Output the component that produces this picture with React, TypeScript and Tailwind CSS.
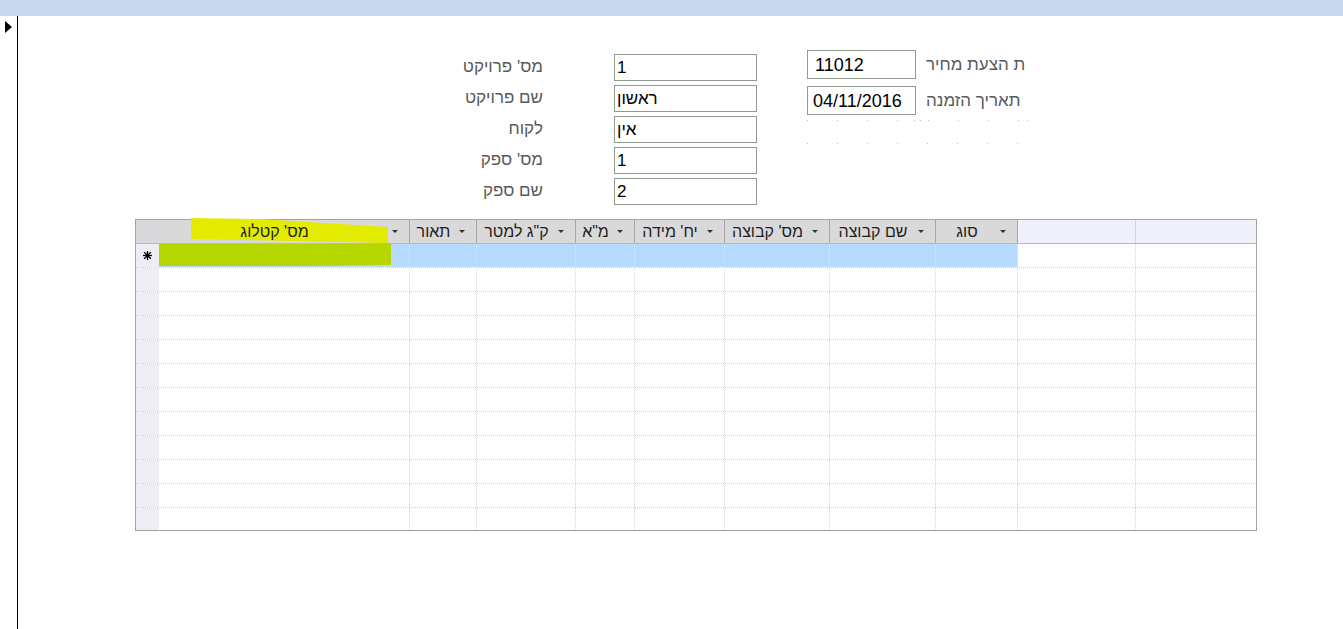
import React from "react";

const cols = [
  { w: 251, t: "מס' קטלוג" },
  { w: 67, t: "תאור" },
  { w: 99, t: 'ק"ג למטר' },
  { w: 59, t: 'מ"א' },
  { w: 90, t: "יח' מידה" },
  { w: 105, t: "מס' קבוצה" },
  { w: 106, t: "שם קבוצה" },
  { w: 82, t: "סוג" },
];

const gridCls =
  "grid grid-cols-[23px_251px_67px_99px_59px_90px_105px_106px_82px_118px_120px]";

function Arrow() {
  return (
    <span className="w-0 h-0 border-x-[3px] border-t-[3px] border-x-transparent border-t-[#333] shrink-0" />
  );
}

function DotsA() {
  return (
    <div className="flex h-[1px]">
      <div className="w-[107px] h-[1px] bg-[repeating-linear-gradient(90deg,#bdbdbd_0_1px,transparent_1px_30px)]" />
      <div className="w-[1px] h-[1px] bg-[#bdbdbd]" />
      <div className="w-[1px] h-[1px] ml-[5px] bg-[#bdbdbd]" />
      <div className="w-[91px] h-[1px] ml-[7px] bg-[repeating-linear-gradient(90deg,#bdbdbd_0_1px,transparent_1px_30px)]" />
      <div className="w-[1px] h-[1px] ml-[8px] bg-[#bdbdbd]" />
    </div>
  );
}

function DotsB() {
  return (
    <div className="w-[220px] h-[1px] bg-[repeating-linear-gradient(90deg,#bdbdbd_0_1px,transparent_1px_30px)]" />
  );
}

export default function App() {
  const leftFields = [
    ["מס' פרויקט", "1"],
    ["שם פרויקט", "ראשון"],
    ["לקוח", "אין"],
    ["מס' ספק", "1"],
    ["שם ספק", "2"],
  ];
  const emptyRows = Array.from({ length: 11 });

  return (
    <div className="w-[1343px] h-[629px] bg-white overflow-hidden flex flex-col font-['Liberation_Sans','DejaVu_Sans',sans-serif]">
      <div className="h-[16px] shrink-0 bg-[#cbd9ee]" />
      <div className="flex flex-1">
        <div className="w-[18px] shrink-0 border-r border-black pt-[5px] pl-[5px]">
          <div className="w-0 h-0 border-y-[6px] border-l-[7px] border-y-transparent border-l-black" />
        </div>
        <div className="flex-1 flex flex-col">
          {/* form */}
          <div className="flex pl-[395px]">
            <div className="mt-[38px] flex flex-col gap-[4px]">
              {leftFields.map(([l, v]) => (
                <div key={l} className="flex items-center h-[27px]">
                  <div
                    dir="rtl"
                    className="w-[130px] text-[17px] text-[#5a5a5a] text-right leading-none -mt-[3px]"
                  >
                    {l}
                  </div>
                  <div className="ml-[71px] w-[143px] h-[27px] border border-[#8e9c8e] bg-white flex items-center pl-[2px] text-[17px] text-black leading-none">
                    <span dir="rtl">{v}</span>
                  </div>
                </div>
              ))}
            </div>
            <div className="ml-[50px] mt-[34px] flex flex-col">
              <div className="flex items-center h-[29px]">
                <div className="w-[109px] h-[29px] border border-[#8e9c8e] flex items-center pl-[7px] text-[18px] text-black leading-none">
                  11012
                </div>
                <span dir="rtl" className="ml-[10px] text-[17px] text-[#5a5a5a] leading-none">
                  ת הצעת מחיר
                </span>
              </div>
              <div className="flex items-center h-[29px] mt-[7px]">
                <div className="w-[109px] h-[29px] border border-[#8e9c8e] flex items-center pl-[5px] text-[18px] text-black leading-none">
                  04/11/2016
                </div>
                <span dir="rtl" className="ml-[10px] text-[17px] text-[#5a5a5a] leading-none">
                  תאריך הזמנה
                </span>
              </div>
              <div className="mt-[5px]">
                <DotsA />
              </div>
              <div className="mt-[22px]">
                <DotsB />
              </div>
            </div>
          </div>

          {/* datasheet */}
          <div className="relative ml-[117px] mt-[14px] w-[1122px] border border-[#a3a3a3]">
            <svg
              className="absolute left-0 top-0 z-10 pointer-events-none overflow-visible"
              width="1120"
              height="60"
            >
              <polygon
                points="55,-2 124,-1 252,7 252,23 155,21 55,19"
                fill="#e3eb00"
              />
              <polygon points="23,24 255,24 255,45 170,46 23,46" fill="#b6d600" />
            </svg>
            {/* header */}
            <div className={`${gridCls} h-[24px] border-b border-[#b8b8c0]`}>
              <div className="bg-[#d9d9dc]" />
              {cols.map((c) => (
                <div
                  key={c.t}
                  className="bg-[#d9d9d9] border-r border-[#a6a6a6] flex items-center pr-[9px]"
                >
                  <span
                    dir="rtl"
                    className="relative z-20 flex-1 text-center text-[16px] text-[#1e1e1e] leading-none whitespace-nowrap"
                  >
                    {c.t}
                  </span>
                  <span className="relative z-20 w-[10px] flex justify-center">
                    <Arrow />
                  </span>
                </div>
              ))}
              <div className="bg-[#eef0fa] border-r border-[#cdd3ea]" />
              <div className="bg-[#eef0fa]" />
            </div>
            {/* new row */}
            <div className={`${gridCls} h-[24px] border-b border-dotted border-[#d2d2dc]`}>
              <div className="bg-[#eeedf5] flex items-center justify-center">
                <svg width="9" height="9" viewBox="0 0 9 9" className="relative z-20">
                  <g stroke="#000" strokeWidth="1.3">
                    <line x1="4.5" y1="0" x2="4.5" y2="9" />
                    <line x1="0" y1="4.5" x2="9" y2="4.5" />
                    <line x1="1.2" y1="1.2" x2="7.8" y2="7.8" />
                    <line x1="7.8" y1="1.2" x2="1.2" y2="7.8" />
                  </g>
                </svg>
              </div>
              {cols.map((c) => (
                <div key={c.t} className="bg-[#b7dbff] border-r border-[#c6e2ff]" />
              ))}
              <div className="border-r border-dotted border-[#d2d2dc]" />
              <div />
            </div>
            {/* empty rows */}
            {emptyRows.map((_, i) => (
              <div
                key={i}
                className={`${gridCls} ${
                  i === emptyRows.length - 1
                    ? "h-[22px]"
                    : "h-[24px] border-b border-dotted border-[#d2d2dc]"
                }`}
              >
                <div className="bg-[#eeedf5]" />
                {cols.map((c) => (
                  <div key={c.t} className="border-r border-dotted border-[#d2d2dc]" />
                ))}
                <div className="border-r border-dotted border-[#d2d2dc]" />
                <div />
              </div>
            ))}
          </div>
        </div>
      </div>
    </div>
  );
}
